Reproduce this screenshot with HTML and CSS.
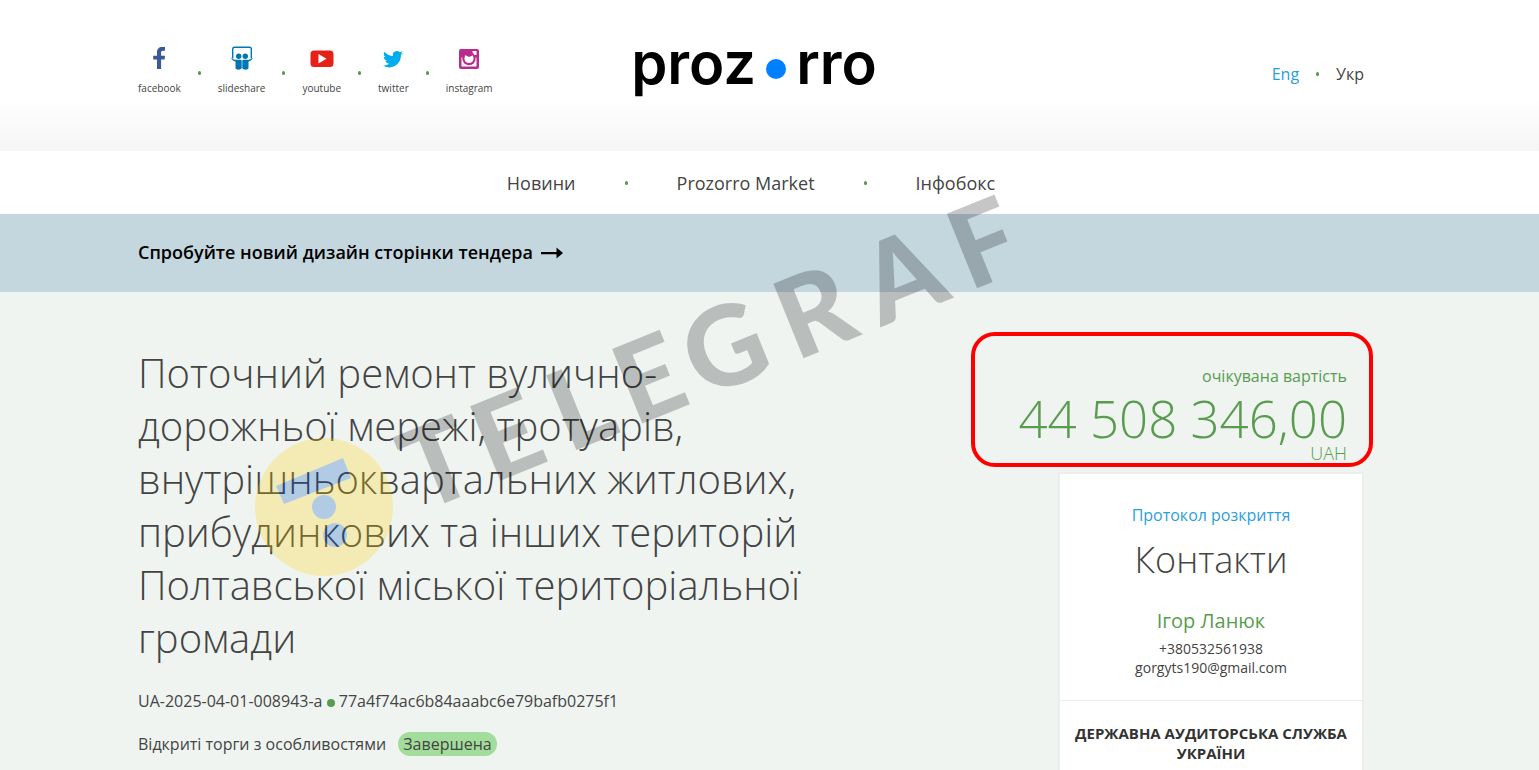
FILE: index.html
```html
<!DOCTYPE html>
<html lang="uk">
  <head>
    <meta charset="utf-8">
    <title>Prozorro</title>
    <link rel="stylesheet" href="styles.css">
  </head>
  <body>

    <header class="header">
      <div class="container header-row">
        <ul class="social">
          <li>
            <a href="#facebook">
              <svg width="24" height="24" viewBox="0 0 24 24"><path fill="#3b5998" d="M10 23v-9.500H6.200V9.700H10V6.400C10 3 12 1 15 1h3v3.800h-2c-1.500 0-1.900.7-1.900 2v2.900h3.900l-.4 3.800h-3.500V23z"/></svg>
              <span>facebook</span>
            </a>
          </li>
          <li>
            <a href="#slideshare">
              <svg width="24" height="24" viewBox="0 0 24 24">
                <path fill="none" stroke="#0077b5" stroke-width="1.400" d="M2.700 12.500V3.100Q2.700 1.300 4.500 1.300h15q1.800 0 1.800 1.800v9.400"/>
                <path fill="#0077b5" d="M.8 11.500c2.500 2.300 5 2.500 9.700 2.300 1 0 1.200.5 1.200 1.300v7c-.5 2.200-6.200 2.200-6.200 0v-6.500c-2.500-.8-4-2.200-4.700-4.100zM23.200 11.500c-2.500 2.300-5 2.500-9.200 2.300-1 0-1.700.5-1.700 1.300v7c.5 2.200 6.200 2.200 6.200 0v-6.500c2.500-.8 4-2.200 4.700-4.100z"/>
                <circle fill="#0077b5" cx="8.700" cy="10.300" r="2.700"/>
                <circle fill="#0077b5" cx="15.300" cy="10.300" r="2.700"/>
              </svg>
              <span>slideshare</span>
            </a>
          </li>
          <li>
            <a href="#youtube">
              <svg width="24" height="24" viewBox="0 0 24 24">
                <rect x="0.500" y="4.500" width="23" height="16.500" rx="3.500" fill="#e62117"/>
                <path fill="#fff" d="M8.500 8v9.500l8-4.700z"/>
              </svg>
              <span>youtube</span>
            </a>
          </li>
          <li>
            <a href="#twitter">
              <svg width="24" height="24" viewBox="0 0 24 24"><path fill="#00aced" d="M22 6.900a8 8 0 0 1-2.300.6 4 4 0 0 0 1.800-2.200 8 8 0 0 1-2.600 1 4.100 4.100 0 0 0-7 3.700A11.600 11.600 0 0 1 3.500 5.700a4.100 4.100 0 0 0 1.300 5.500 4 4 0 0 1-1.900-.5 4.100 4.100 0 0 0 3.300 4.100 4 4 0 0 1-1.800.1 4.100 4.100 0 0 0 3.800 2.800A8.200 8.200 0 0 1 2 19.400a11.600 11.600 0 0 0 17.900-10.300A8 8 0 0 0 22 6.900z"/></svg>
              <span>twitter</span>
            </a>
          </li>
          <li>
            <a href="#instagram">
              <svg width="24" height="24" viewBox="0 0 24 24">
                <rect x="2" y="3" width="20" height="20" rx="2" fill="#b92b8f"/>
                <path fill="#fff" d="M15.500 5h4v4h-4zM4.500 11.500h15v9h-15z"/>
                <circle cx="12" cy="12.500" r="6.700" fill="#b92b8f"/>
                <circle cx="12" cy="12.500" r="4.600" fill="#fff"/>
                <path fill="#b92b8f" d="M8.500 6.500h7v3L12 11 9 9.500z"/>
              </svg>
              <span>instagram</span>
            </a>
          </li>
        </ul>

        <a class="logo" href="#home">proz<i class="logo-dot"></i>rro</a>

        <div class="lang">
          <a class="link" href="#en">Eng</a>
          <i class="dot"></i>
          <span>Укр</span>
        </div>
      </div>
    </header>

    <nav class="menu">
      <div class="container menu-row">
        <a href="#news">Новини</a>
        <i class="dot"></i>
        <a href="#market">Prozorro Market</a>
        <i class="dot"></i>
        <a href="#infobox">Інфобокс</a>
      </div>
    </nav>

    <div class="banner">
      <div class="container">
        <a href="#new-design">Спробуйте новий дизайн сторінки тендера
          <svg width="22" height="12" viewBox="0 0 22 12"><path d="M0 5h15.500V.5L22 6l-6.500 5.500V7.200H0z"/></svg>
        </a>
      </div>
    </div>

    <main class="tender">
      <div class="container tender-row">
        <section class="info">
          <h1>Поточний ремонт вулично-дорожньої мережі, тротуарів, внутрішньоквартальних житлових, прибудинкових та інших територій Полтавської міської територіальної громади</h1>
          <p class="number">UA-2025-04-01-008943-a <i class="big-dot"></i> 77a4f74ac6b84aaabc6e79bafb0275f1</p>
          <p class="type">Відкриті торги з особливостями <span class="status">Завершена</span></p>
        </section>

        <aside class="side">
          <div class="price">
            <div class="price-label">очікувана вартість</div>
            <div class="price-sum">44 508 346,00</div>
            <div class="price-currency">UAH</div>
          </div>
          <div class="card">
            <div class="contacts">
              <a class="link" href="#protocol">Протокол розкриття</a>
              <h2>Контакти</h2>
              <h3>Ігор Ланюк</h3>
              <p>+380532561938</p>
              <p>gorgyts190@gmail.com</p>
            </div>
            <div class="audit">ДЕРЖАВНА АУДИТОРСЬКА СЛУЖБА УКРАЇНИ</div>
          </div>
        </aside>
      </div>
    </main>

    <svg class="watermark" width="840" height="460" viewBox="240 140 840 460">
      <g class="watermark-text" transform="translate(500 481) rotate(-22)">
        <text x="-85">T</text>
        <text x="-8">E</text>
        <text x="74">L</text>
        <text x="145">E</text>
        <text x="218">G</text>
        <text x="319">R</text>
        <text x="411">A</text>
        <text x="506">F</text>
      </g>
      <g opacity="0.25">
        <circle cx="324" cy="507" r="69" fill="#ffd400"/>
        <path fill="#0054c4" d="M276 486l67-28 8 20-67 26z"/>
        <circle cx="324" cy="507" r="12" fill="#0054c4"/>
        <circle cx="335" cy="535" r="12" fill="#0054c4"/>
      </g>
    </svg>

  </body>
</html>
```
FILE: styles.css
```css
*, *::before, *::after {
  box-sizing: border-box;
}

body {
  margin: 0;
  position: relative;
  min-height: 100vh;
  overflow: hidden;
  font-family: "Open Sans", "Noto Sans", sans-serif;
  font-size: 16px;
  color: #444444;
  background-color: #eff4f1;
}

a {
  color: inherit;
  text-decoration: none;
}

h1, h2, h3, p, ul {
  margin: 0;
  padding: 0;
  font-weight: 400;
}

.container {
  margin: 0 175px 0 138px;
}

.link {
  color: #2b9fda;
}

.dot {
  width: 3px;
  height: 4px;
  border-radius: 2px;
  background-color: #5a9c4f;
}

/* header */
.header {
  height: 151px;
  background: linear-gradient(#ffffff 66%, #f5f5f5);
}

.header-row {
  display: grid;
  grid-template-columns: 1fr auto 1fr;
  padding-top: 36px;
}

.social {
  display: flex;
  list-style: none;
  padding-top: 10px;
}

.social li {
  display: flex;
  align-items: center;
}

.social li + li::before {
  content: "";
  width: 3px;
  height: 4px;
  margin: 0 17px;
  border-radius: 2px;
  background-color: #5a9c4f;
}

.social a {
  display: flex;
  flex-direction: column;
  align-items: center;
  gap: 10px;
  padding-bottom: 4px;
  font-size: 10px;
  line-height: 16px;
}

.logo {
  display: flex;
  align-items: center;
  align-self: start;
  padding-left: 6px;
  font-family: "Inter", sans-serif;
  font-size: 58px;
  font-weight: 600;
  line-height: 54px;
  color: #000000;
}

.logo-dot {
  width: 20px;
  height: 20px;
  margin: 11px 10px 0;
  border-radius: 50%;
  background-color: #0080ff;
}

.lang {
  display: flex;
  justify-content: flex-end;
  align-items: center;
  gap: 17px;
  padding-top: 12px;
}

/* menu */
.menu {
  background-color: #ffffff;
}

.menu-row {
  display: flex;
  justify-content: center;
  align-items: center;
  gap: 49px;
  height: 63px;
  font-size: 18px;
}

.banner {
  padding: 25px 0 27px;
  font-size: 18px;
  font-weight: 600;
  line-height: 26px;
  color: #000000;
  background-color: #c4d7df;
}

.banner svg {
  margin-left: 3px;
}

/* tender */
.tender-row {
  display: flex;
  justify-content: space-between;
}

.info {
  width: 57%;
  padding-top: 54px;
}

.info h1 {
  font-size: 40px;
  font-weight: 300;
  line-height: 53px;
}

.number {
  margin-top: 25px;
  line-height: 24px;
}

.big-dot {
  display: inline-block;
  width: 8px;
  height: 8px;
  border-radius: 50%;
  background-color: #5a9c4f;
}

.type {
  margin-top: 19px;
  line-height: 24px;
}

.status {
  display: inline-block;
  margin-left: 8px;
  padding: 0 5px;
  border-radius: 12px;
  background-color: #a2dd9b;
}

.side {
  display: flex;
  flex-direction: column;
  align-items: flex-end;
  padding-top: 40px;
}

.price {
  position: relative;
  padding: 32px 17px 0 47px;
  height: 140px;
  text-align: right;
  color: #5a9c4f;
}

.price::after {
  content: "";
  position: absolute;
  top: 0;
  left: 0;
  right: -9px;
  height: 135px;
  border: 4px solid #ff0000;
  border-radius: 24px;
}

.price-label {
  line-height: 24px;
}

.price-sum {
  margin-top: 4px;
  font-size: 51px;
  font-weight: 300;
  line-height: 52px;
}

.price-currency {
  font-size: 18px;
  font-weight: 300;
  line-height: 18px;
}

.card {
  width: 306px;
  border: 2px solid #ebeeed;
  text-align: center;
  background-color: #ffffff;
}

.contacts {
  padding: 30px 0 23px;
  border-bottom: 1px solid #ebebeb;
}

.contacts h2 {
  margin-top: 9px;
  font-size: 36px;
  font-weight: 300;
  line-height: 50px;
}

.contacts h3 {
  margin: 22px 0 4px;
  font-size: 20px;
  line-height: 28px;
  color: #5a9c4f;
}

.contacts p {
  font-size: 14px;
  line-height: 19px;
}

.audit {
  padding: 22px 10px;
  font-size: 15px;
  font-weight: 700;
  line-height: 20px;
  color: #333333;
}

.watermark {
  position: absolute;
  top: 140px;
  left: 240px;
  pointer-events: none;
}

.watermark-text {
  font-family: "Lato", sans-serif;
  font-size: 111px;
  font-weight: 900;
  opacity: 0.22;
  fill: #000000;
}
```
